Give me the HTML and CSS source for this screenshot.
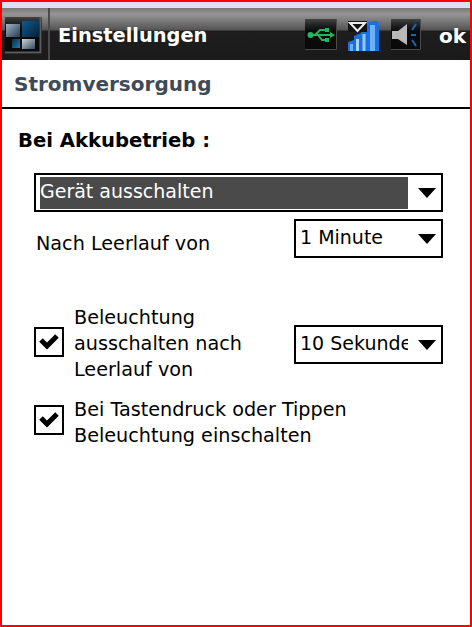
FILE: index.html
```html
<!DOCTYPE html>
<html lang="de">

<head>
    <meta charset="UTF-8">
    <title>Einstellungen</title>
    <link rel="stylesheet" href="styles.css">
</head>

<body>
    <div class="screen">
        <div class="top-strip"></div>
        <div class="title-bar">
            <div class="start-button">
                <svg width="37" height="37" viewBox="0 0 37 37">
                    <defs>
                        <linearGradient id="pane-a" x1="0" y1="0" x2="1" y2="1">
                            <stop offset="0" stop-color="#a4b4c8" />
                            <stop offset="1" stop-color="#233a50" />
                        </linearGradient>
                        <linearGradient id="pane-b" x1="0" y1="0" x2="1" y2="1">
                            <stop offset="0" stop-color="#0f5a8c" />
                            <stop offset="1" stop-color="#062038" />
                        </linearGradient>
                        <linearGradient id="pane-c" x1="0" y1="0" x2="1" y2="1">
                            <stop offset="0" stop-color="#0a2c48" />
                            <stop offset="1" stop-color="#1f7cb4" />
                        </linearGradient>
                        <linearGradient id="pane-d" x1="0" y1="0" x2="1" y2="1">
                            <stop offset="0" stop-color="#d0d6de" />
                            <stop offset="1" stop-color="#34475a" />
                        </linearGradient>
                        <linearGradient id="box-fade" x1="0" y1="0" x2="0" y2="1">
                            <stop offset="0" stop-color="#0a0a0a" stop-opacity="0.55" />
                            <stop offset="0.35" stop-color="#0a0a0a" />
                        </linearGradient>
                    </defs>
                    <rect width="37" height="37" fill="url(#box-fade)" />
                    <path d="M0 35.5H35.5V0" fill="none" stroke="#5c5c5c" stroke-width="2" />
                    <rect x="1" y="7" width="14" height="13" fill="url(#pane-a)" />
                    <rect x="17" y="4" width="17" height="16" fill="url(#pane-b)" />
                    <rect x="7" y="22" width="8" height="9" fill="url(#pane-c)" />
                    <rect x="17" y="22" width="13" height="10" fill="url(#pane-d)" />
                </svg>
            </div>
            <span class="title-text">Einstellungen</span>
            <div class="tray">
                <!-- usb -->
                <svg class="tray-usb" width="32" height="31" viewBox="0 0 32 31">
                    <defs>
                        <linearGradient id="tray-fade" x1="0" y1="0" x2="0" y2="1">
                            <stop offset="0" stop-color="#0a0a0a" stop-opacity="0.5" />
                            <stop offset="0.4" stop-color="#0a0a0a" />
                        </linearGradient>
                    </defs>
                    <rect width="32" height="31" fill="url(#tray-fade)" />
                    <path d="M31.5 0V30.5H0" fill="none" stroke="#4a4a4a" />
                    <path d="M5 16H27M10 16L15 11H21M13 16L17 21H21" fill="none" stroke="#1fb85a" stroke-width="2" />
                    <circle cx="5.5" cy="16" r="3" fill="#1fb85a" />
                    <path d="M25 13L30 16L25 19Z" fill="#1fb85a" />
                    <rect x="20" y="9" width="4" height="4" fill="#1fb85a" />
                    <rect x="20" y="19" width="4" height="4" fill="#1fb85a" />
                </svg>
                <!-- signal -->
                <svg class="tray-signal" width="32" height="30" viewBox="0 0 32 30">
                    <path d="M0 30V21L6 19V15L13 12V8L20 5V1L26 0H29L31 3V30Z" fill="#1a70e0" />
                    <rect x="0" y="0" width="19" height="11" fill="#141414" />
                    <path d="M2 2H17L9.5 10Z" fill="none" stroke="#eee" stroke-width="2" />
                    <rect x="2" y="23" width="3" height="7" fill="#6cb0f2" />
                    <rect x="8" y="18" width="3" height="12" fill="#a8d2f8" />
                    <rect x="14.5" y="13" width="3" height="17" fill="#98c8f6" />
                    <rect x="22" y="4" width="5" height="26" fill="#6fb2f4" />
                </svg>
                <!-- speaker -->
                <svg class="tray-speaker" width="30" height="31" viewBox="0 0 30 31">
                    <rect width="30" height="31" fill="url(#tray-fade)" />
                    <path d="M29.5 0V30.5H0" fill="none" stroke="#4a4a4a" />
                    <path d="M1 12H7L16 5V26L7 20H1Z" fill="#b8b8b8" />
                    <path d="M25 5L21 11M20 16H25M21 21L25 27" fill="none" stroke="#1868b8" stroke-width="2" />
                </svg>
            </div>
            <span class="ok-text">ok</span>
        </div>
        <div class="sub-title">Stromversorgung</div>

        <div class="content">
            <div class="section-label">Bei Akkubetrieb :</div>

            <div class="select select-wide">
                <div class="select-value is-selected">Gerät ausschalten</div>
                <span class="arrow"></span>
            </div>

            <div class="row row-idle">
                <span class="row-label">Nach Leerlauf von</span>
                <div class="select select-small">
                    <div class="select-value">1 Minute</div>
                    <span class="arrow"></span>
                </div>
            </div>

            <div class="row row-light">
                <span class="check">
                    <svg width="22" height="18" viewBox="0 0 22 18">
                        <path d="M3 7L9 13L19 3" fill="none" stroke="#000" stroke-width="5" />
                    </svg>
                </span>
                <span class="check-label check-label-3">Beleuchtung ausschalten nach Leerlauf von</span>
                <div class="select select-small select-light">
                    <div class="select-value">10 Sekunden</div>
                    <span class="arrow"></span>
                </div>
            </div>

            <div class="row row-tap">
                <span class="check check-tap">
                    <svg width="22" height="18" viewBox="0 0 22 18">
                        <path d="M3 7L9 13L19 3" fill="none" stroke="#000" stroke-width="5" />
                    </svg>
                </span>
                <span class="check-label">Bei Tastendruck oder Tippen<br>Beleuchtung einschalten</span>
            </div>
        </div>
    </div>
</body>

</html>
```

FILE: styles.css
```css
* {
    box-sizing: border-box;
}

body {
    margin: 0;
    padding: 0;
    background-color: #fff;
    font-family: "DejaVu Sans", sans-serif;
    color: #000;
}

.screen {
    width: 472px;
    height: 627px;
    border: 2px solid #f00;
    overflow: hidden;
}

.top-strip {
    height: 6px;
    background-color: #dfe0ee;
}

.title-bar {
    height: 52px;
    display: flex;
    align-items: center;
    padding-left: 3px;
    background: linear-gradient(to bottom, #787878 0, #969696 6px, #545454 22px, #1e1e1e 23px, #1a1a1a 100%);
}

.start-button {
    width: 45px;
    height: 52px;
    padding-top: 9px;
    border-right: 2px solid #4a4a4a;
    display: flex;
    align-items: flex-start;
}

.title-text {
    margin-left: 8px;
    margin-top: 3px;
    color: #fff;
    font-size: 19.4px;
    font-weight: bold;
}

.tray {
    margin-left: auto;
    align-self: flex-start;
    display: flex;
    align-items: flex-start;
}

.tray-usb {
    margin-top: 11px;
}

.tray-signal {
    margin-left: 11px;
    margin-top: 13px;
}

.tray-speaker {
    margin-left: 11px;
    margin-top: 11px;
}

.ok-text {
    margin-left: 18px;
    margin-right: 4px;
    margin-top: 3px;
    color: #fff;
    font-size: 20px;
    font-weight: bold;
}

.sub-title {
    height: 49px;
    padding: 12px 0 0 12px;
    border-bottom: 2px solid #000;
    color: #3f4a58;
    font-size: 20px;
    font-weight: bold;
}

.content {
    padding: 20px 27px 0 32px;
}

.section-label {
    margin-left: -16px;
    font-size: 19.6px;
    font-weight: bold;
    height: 44px;
}

.select {
    height: 39px;
    border: 2px solid #000;
    display: flex;
    align-items: center;
    padding: 2px 0 2px 4px;
    background-color: #fff;
}

.select-wide {
    width: 409px;
}

.select-small {
    width: 149px;
    margin-left: auto;
    flex: none;
}

.select-light {
    align-self: flex-start;
    margin-top: 22px;
}

.select-value {
    width: 368px;
    height: 32px;
    line-height: 29px;
    font-size: 19px;
    white-space: nowrap;
    overflow: hidden;
}

.select-small .select-value {
    width: 108px;
}

.is-selected {
    background-color: #4a4a4a;
    color: #fff;
}

.arrow {
    margin-left: 10px;
    width: 0;
    height: 0;
    border-left: 9px solid transparent;
    border-right: 9px solid transparent;
    border-top: 10px solid #000;
}

.row {
    display: flex;
    align-items: center;
}

.row-idle {
    margin-top: 7px;
    height: 39px;
}

.row-label {
    margin-left: 2px;
    margin-top: 9px;
    font-size: 19.2px;
}

.row-light {
    margin-top: 45px;
    height: 78px;
}

.row-tap {
    margin-top: 16px;
    height: 52px;
}

.check {
    width: 30px;
    height: 30px;
    flex: none;
    border: 2px solid #000;
    display: flex;
    align-items: center;
    justify-content: center;
}

.check-tap {
    align-self: flex-start;
    margin-top: 8px;
}

.check-label {
    margin-left: 10px;
    font-size: 19.2px;
    line-height: 26px;
}

.check-label-3 {
    width: 200px;
    margin-top: 4px;
}
```
